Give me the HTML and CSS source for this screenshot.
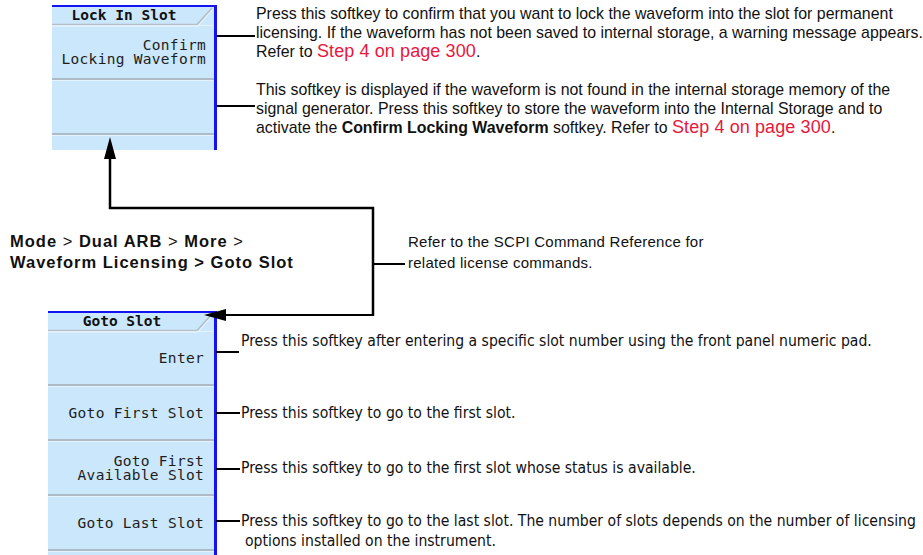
FILE: index.html
```html
<!DOCTYPE html>
<html lang="en">
<head>
    <meta charset="UTF-8">
    <title>Waveform Licensing - Goto Slot</title>
    <link rel="stylesheet" href="styles.css">
</head>
<body>
<div class="page">

    <!-- Lock In Slot menu -->
    <div class="top-row">
        <div class="softpanel lock-panel">
            <div class="panel-title">
                <svg class="title-edge" viewBox="0 0 162 20" preserveAspectRatio="none">
                    <polyline points="0,17.5 145,17.5 160,1" fill="none" stroke="#b3bec7" stroke-width="1.5"/>
                    <polyline points="0,19 146,19 161,2" fill="none" stroke="#eef7fd" stroke-width="1"/>
                </svg>
                <span>Lock In Slot</span>
            </div>
            <div class="softkey">Confirm<br>Locking Waveform</div>
            <div class="softkey"></div>
            <div class="softkey"></div>
        </div>

        <div class="callouts">
            <p class="note">Press this softkey to confirm that you want to lock the waveform into the slot for permanent<br>
                licensing. If the waveform has not been saved to internal storage, a warning message appears.<br>
                Refer to <span class="xref">Step 4 on page 300</span>.</p>
            <p class="note second">This softkey is displayed if the waveform is not found in the internal storage memory of the<br>
                signal generator. Press this softkey to store the waveform into the Internal Storage and to<br>
                activate the <b>Confirm Locking Waveform</b> softkey. Refer to <span class="xref">Step 4 on page 300</span>.</p>
        </div>
    </div>

    <!-- key path + SCPI note -->
    <div class="mid-row">
        <div class="key-path">
            <b>Mode</b> &gt; <b>Dual ARB</b> &gt; <b>More</b> &gt;<br>
            <b>Waveform Licensing &gt; Goto Slot</b>
        </div>
        <p class="scpi-note">Refer to the SCPI Command Reference for<br>related license commands.</p>
    </div>

    <!-- Goto Slot menu -->
    <div class="bottom-row">
        <div class="softpanel goto-panel">
            <div class="panel-title">
                <svg class="title-edge" viewBox="0 0 166 20" preserveAspectRatio="none">
                    <polyline points="0,17.5 149,17.5 164,1" fill="none" stroke="#b3bec7" stroke-width="1.5"/>
                    <polyline points="0,19 150,19 165,2" fill="none" stroke="#eef7fd" stroke-width="1"/>
                </svg>
                <span>Goto Slot</span>
            </div>
            <div class="softkey">Enter</div>
            <div class="softkey">Goto First Slot</div>
            <div class="softkey">Goto First<br>Available Slot</div>
            <div class="softkey">Goto Last Slot</div>
            <div class="softkey"></div>
        </div>

        <div class="key-notes">
            <div class="key-note enter">Press this softkey after entering a specific slot number using the front panel numeric pad.</div>
            <div class="key-note">Press this softkey to go to the first slot.</div>
            <div class="key-note">Press this softkey to go to the first slot whose status is available.</div>
            <div class="key-note last">Press this softkey to go to the last slot. The number of slots depends on the number of licensing<br>
                <span class="indent">options installed on the instrument.</span></div>
        </div>
    </div>

    <!-- leader lines and arrows of the diagram -->
    <svg class="leaders" width="923" height="555" viewBox="0 0 923 555">
        <g stroke="#000" stroke-width="2" fill="none">
            <line x1="217" y1="36" x2="255" y2="36"/>
            <line x1="217" y1="106" x2="255" y2="106"/>
            <polyline points="110,157 110,208 373,208 373,316" stroke-width="2.5"/>
            <line x1="373" y1="264" x2="405" y2="264"/>
            <line x1="373" y1="315" x2="222" y2="315"/>
            <line x1="216" y1="352" x2="239" y2="352"/>
            <line x1="216" y1="413" x2="240" y2="413"/>
            <line x1="216" y1="469" x2="240" y2="469"/>
            <line x1="216" y1="521" x2="240" y2="521"/>
        </g>
        <g fill="#000">
            <polygon points="110,137 104,159 116,159"/>
            <polygon points="204,315 226,309 226,321"/>
        </g>
    </svg>
</div>
</body>
</html>
```

FILE: styles.css
```css
body {
    margin: 0;
    background-color: #fff;
}
.page {
    position: relative;
    width: 923px;
    height: 555px;
    overflow: hidden;
    font-family: "Liberation Sans", Arial, sans-serif;
    color: #111;
}
p {
    margin: 0;
}

/* softkey panels */
.softpanel {
    flex: none;
    box-sizing: border-box;
    background-color: #cbe7fb;
    border-top: 2px solid #1212f5;
    border-right: 3px solid #1212f5;
    overflow: hidden;
}
.lock-panel {
    margin: 5px 0 0 52px;
    width: 165px;
    height: 145px;
}
.lock-panel .softkey {
    padding-right: 8px;
}
.goto-panel {
    margin-left: 48px;
    width: 169px;
    height: 250px;
}
.panel-title {
    position: relative;
    height: 18px;
    padding-right: 18px;
    text-align: center;
    font-family: "DejaVu Sans Mono", monospace;
    font-weight: bold;
    font-size: 14.5px;
    line-height: 16px;
    color: #111;
}
.panel-title span {
    position: relative;
}
.title-edge {
    position: absolute;
    left: 0;
    top: 0;
    width: 100%;
    height: 20px;
}
.softkey {
    box-sizing: border-box;
    height: 55px;
    padding-right: 10px;
    display: flex;
    align-items: center;
    justify-content: flex-end;
    text-align: right;
    font-family: "DejaVu Sans Mono", monospace;
    font-size: 14.5px;
    letter-spacing: 0.3px;
    line-height: 14.5px;
    color: #1d1d1d;
    border-top: 1px solid #e4f2fc;
    border-bottom: 2px solid #afbbc4;
}

/* rows */
.top-row {
    display: flex;
    height: 150px;
}
.callouts {
    margin-left: 39px;
    padding-top: 4px;
}
.note {
    font-size: 15.9px;
    line-height: 19px;
    white-space: nowrap;
}
.note.second {
    margin-top: 19px;
}
.xref {
    color: #e8173d;
    font-size: 18px;
    letter-spacing: 0.1px;
}

.mid-row {
    display: flex;
    margin-top: 81px;
    height: 42px;
}
.key-path {
    box-sizing: border-box;
    width: 408px;
    padding-left: 10px;
    font-size: 16.5px;
    letter-spacing: 1px;
    line-height: 21px;
}
.scpi-note {
    font-size: 15px;
    letter-spacing: 0.25px;
    line-height: 21px;
}

.bottom-row {
    display: flex;
    margin-top: 38px;
}
.key-notes {
    margin-left: 24px;
    padding-top: 20px;
    font-family: "Liberation Sans Narrow", "DejaVu Sans Condensed", "Liberation Sans", sans-serif;
    font-size: 15.6px;
    line-height: 20px;
    color: #111;
    white-space: nowrap;
}
.key-note {
    height: 55px;
    box-sizing: border-box;
    padding-top: 17px;
}
.key-note.enter {
    padding-top: 0;
}
.key-note.last {
    padding-top: 15px;
}
.indent {
    padding-left: 4px;
}

/* diagram leaders over everything */
.leaders {
    position: absolute;
    left: 0;
    top: 0;
    pointer-events: none;
}
```
